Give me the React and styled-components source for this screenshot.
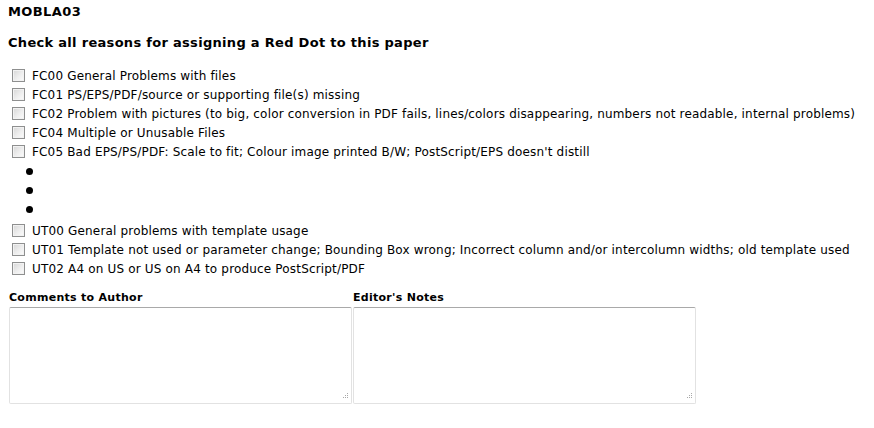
import React from 'react';
import styled, { createGlobalStyle } from 'styled-components';

const GlobalStyle = createGlobalStyle`
  html, body {
    margin: 0;
    padding: 0;
    background: #ffffff;
  }
  body {
    font-family: "DejaVu Sans", Verdana, sans-serif;
    color: #000000;
  }
`;

const Page = styled.div`
  display: flex;
  flex-direction: column;
  align-items: flex-start;
  padding: 4px 8px 0;
`;

const PaperCode = styled.h1`
  margin: 0;
  font-size: 13px;
  line-height: 16px;
  letter-spacing: 0.4px;
  font-weight: bold;
`;

const Heading = styled.h2`
  margin: 15px 0 0;
  font-size: 13px;
  line-height: 16px;
  letter-spacing: 0.3px;
  font-weight: bold;
`;

const ReasonList = styled.div`
  display: flex;
  flex-direction: column;
  margin-top: ${props => props.gap || 0}px;
`;

const Reason = styled.label`
  display: flex;
  align-items: center;
  height: 19px;
  font-size: 12px;
  line-height: 14px;
  letter-spacing: 0.17px;
  white-space: nowrap;
`;

const Box = styled.input`
  appearance: none;
  box-sizing: border-box;
  width: 13px;
  height: 13px;
  margin: 3px 7px 3px 4px;
  border: 1px solid #8e8f8f;
  box-shadow: inset 0 0 0 1px #f2f2f2;
  background: linear-gradient(135deg, #d6d6d6 0%, #eeeeee 55%, #fcfcfc 100%);
  flex: none;
`;

const Bullets = styled.ul`
  list-style: none;
  margin: 1px 0 0;
  padding: 0 0 0 18px;
`;

const Bullet = styled.li`
  display: flex;
  align-items: center;
  height: 19px;
  &::before {
    content: '';
    width: 7px;
    height: 7px;
    border-radius: 50%;
    background: #000000;
  }
`;

const Notes = styled.div`
  display: grid;
  grid-template-columns: 343px 343px;
  column-gap: 1px;
  margin-top: 13px;
  padding-left: 1px;
`;

const NoteField = styled.div`
  display: flex;
  flex-direction: column;
  gap: 3px;
`;

const NoteLabel = styled.label`
  font-size: 11px;
  line-height: 13px;
  letter-spacing: 0.28px;
  font-weight: bold;
`;

const AreaWrap = styled.div`
  position: relative;
  height: 97px;
`;

const Area = styled.textarea`
  box-sizing: border-box;
  display: block;
  width: 100%;
  height: 100%;
  margin: 0;
  padding: 2px;
  resize: none;
  border: 1px solid #e2e2e2;
  border-top-color: #a9a9a9;
  border-radius: 2px;
  font-family: "DejaVu Sans", Verdana, sans-serif;
  font-size: 11px;
  outline: none;
`;

const Grip = styled.svg`
  position: absolute;
  right: 4px;
  bottom: 5px;
  width: 6px;
  height: 6px;
  pointer-events: none;
`;

const ResizeGrip = () => (
  <Grip viewBox="0 0 6 6">
    <g fill="#a8a8a8">
      <rect x="5" y="0" width="1" height="1" />
      <rect x="3" y="2" width="1" height="1" />
      <rect x="5" y="2" width="1" height="1" />
      <rect x="1" y="4" width="1" height="1" />
      <rect x="3" y="4" width="1" height="1" />
      <rect x="5" y="4" width="1" height="1" />
    </g>
  </Grip>
);

const fileReasons = [
  'FC00 General Problems with files',
  'FC01 PS/EPS/PDF/source or supporting file(s) missing',
  'FC02 Problem with pictures (to big, color conversion in PDF fails, lines/colors disappearing, numbers not readable, internal problems)',
  'FC04 Multiple or Unusable Files',
  "FC05 Bad EPS/PS/PDF: Scale to fit; Colour image printed B/W; PostScript/EPS doesn't distill",
];

const templateReasons = [
  'UT00 General problems with template usage',
  'UT01 Template not used or parameter change; Bounding Box wrong; Incorrect column and/or intercolumn widths; old template used',
  'UT02 A4 on US or US on A4 to produce PostScript/PDF',
];

const Note = ({ id, label }) => (
  <NoteField>
    <NoteLabel htmlFor={id}>{label}</NoteLabel>
    <AreaWrap>
      <Area id={id} />
      <ResizeGrip />
    </AreaWrap>
  </NoteField>
);

const App = () => (
  <Page>
    <GlobalStyle />
    <PaperCode>MOBLA03</PaperCode>
    <Heading>Check all reasons for assigning a Red Dot to this paper</Heading>
    <ReasonList gap={15}>
      {fileReasons.map(text => (
        <Reason key={text}>
          <Box type="checkbox" />
          {text}
        </Reason>
      ))}
    </ReasonList>
    <Bullets>
      <Bullet />
      <Bullet />
      <Bullet />
    </Bullets>
    <ReasonList gap={2}>
      {templateReasons.map(text => (
        <Reason key={text}>
          <Box type="checkbox" />
          {text}
        </Reason>
      ))}
    </ReasonList>
    <Notes>
      <Note id="comments" label="Comments to Author" />
      <Note id="editor" label="Editor's Notes" />
    </Notes>
  </Page>
);

export default App;
